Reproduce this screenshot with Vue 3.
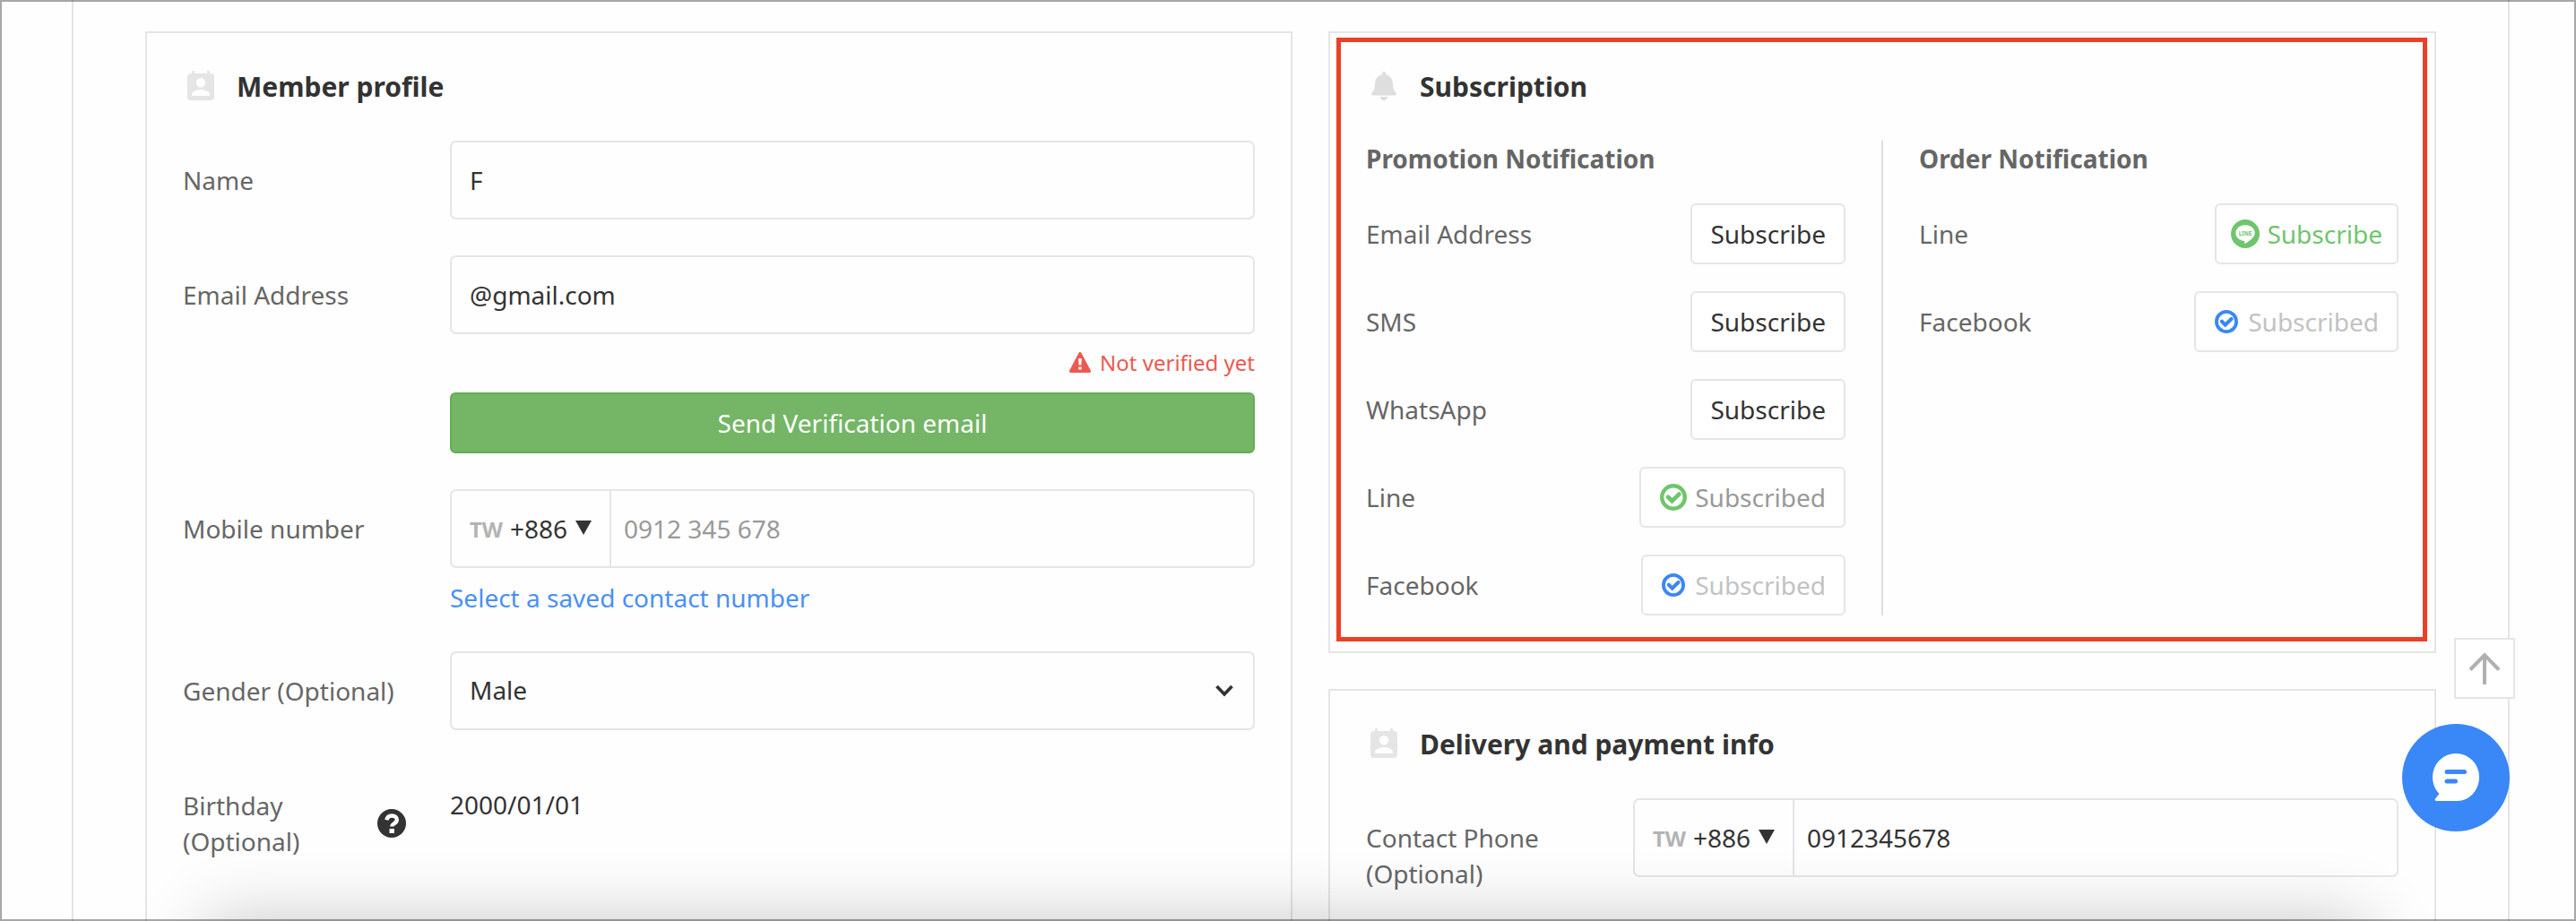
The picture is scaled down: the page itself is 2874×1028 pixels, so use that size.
<template>
  <div class="window">
    <main class="page">
      <section class="card card--profile">
        <h2 class="card__title">
          <svg class="card__icon" viewBox="0 0 34 34">
            <path
              fill="#e5e5e5"
              fill-rule="evenodd"
              d="M7 0h3v3h14V0h3v3h1a4 4 0 0 1 4 4v22a4 4 0 0 1-4 4H6a4 4 0 0 1-4-4V7a4 4 0 0 1 4-4h1zM17 8a5.200 5.200 0 1 0 0 10.400a5.200 5.200 0 1 0 0-10.400zM7 28h20v-1.500c0-3.200-5.500-5.500-10-5.500s-10 2.300-10 5.500z"
            />
          </svg>
          Member profile
        </h2>

        <div class="field field--name">
          <label class="field__label">Name</label>
          <div class="input">F</div>
        </div>

        <div class="field field--email">
          <label class="field__label">Email Address</label>
          <div class="field__body">
            <div class="input">@gmail.com</div>
            <p class="status">
              <svg class="status__icon" viewBox="0 0 24 23">
                <path
                  fill="#eb5a50"
                  fill-rule="evenodd"
                  d="M10.500.9a1.700 1.700 0 0 1 3 0l10.200 19.400A1.700 1.700 0 0 1 22.200 23H1.800A1.700 1.700 0 0 1 .3 20.300zM10.200 7l.4 7.500h2.800l.4-7.500zM10.300 16.500v3h3.400v-3z"
                />
              </svg>
              Not verified yet
            </p>
            <button class="verify-button">Send Verification email</button>
          </div>
        </div>

        <div class="field field--mobile">
          <label class="field__label">Mobile number</label>
          <div class="field__body">
            <div class="input input--phone">
              <span class="country">
                <b class="country__code">TW</b>+886
                <i class="country__caret"></i>
              </span>
              <span class="input__placeholder">0912 345 678</span>
            </div>
            <a class="saved-link">Select a saved contact number</a>
          </div>
        </div>

        <div class="field field--gender">
          <label class="field__label">Gender (Optional)</label>
          <div class="input input--select">
            Male
            <svg class="input__chevron" viewBox="0 0 20 14">
              <path d="M1.500 2 10 10.800 18.500 2" fill="none" stroke="#333" stroke-width="3.600" />
            </svg>
          </div>
        </div>

        <div class="field field--birthday">
          <label class="field__label field__label--help">
            <span>Birthday<br />(Optional)</span>
            <svg class="help-icon" viewBox="0 0 32 32">
              <circle cx="16" cy="16" r="16" fill="#333" />
              <path
                d="M10.300 12.300c.8-3.300 3-4.800 5.900-4.800 3.300 0 5.600 1.900 5.600 4.600 0 4.400-5.400 3.700-5.400 7.500"
                fill="none"
                stroke="#fff"
                stroke-width="4.400"
              />
              <path d="M13.500 22h5.400v5h-5.400z" fill="#fff" />
            </svg>
          </label>
          <span class="birthday">2000/01/01</span>
        </div>
      </section>

      <div class="column">
        <section class="card card--subscription">
          <h2 class="card__title">
            <svg class="card__icon" viewBox="0 0 34 34">
              <path
                fill="#dedede"
                d="M17 1c1.300 0 2 .9 2 2.200v1.100c5.200 1.200 7.700 5 8 10.200.3 5.700 1.100 7.700 3.300 9.800 1.200 1.300.6 3.200-1.200 3.200H4.900c-1.800 0-2.400-1.900-1.200-3.200C5.900 22.200 6.700 20.200 7 14.500c.3-5.200 2.800-9 8-10.200V3.200C15 1.900 15.700 1 17 1zM13 29h8a4 4 0 0 1-8 0z"
              />
            </svg>
            Subscription
          </h2>

          <div class="groups">
            <div
              v-for="group in groups"
              :key="group.title"
              class="group"
            >
              <h3 class="group__title">{{ group.title }}</h3>
              <div v-for="channel in group.channels" :key="channel.name" class="channel">
                <span>{{ channel.name }}</span>
                <button class="channel__button" :class="`channel__button--${channel.state}`">
                  <svg
                    v-if="channel.state === 'line-open'"
                    class="channel__icon"
                    viewBox="0 0 32 32"
                  >
                    <circle cx="16" cy="16" r="16" fill="#6fc56c" />
                    <path
                      fill="#fff"
                      d="M16 6.200c6 0 10.700 3.900 10.700 8.700 0 4.500-5.600 8.700-10.600 11.900-1 .6-1-.4-.8-2.900C9.500 23.500 5.300 19.700 5.300 14.900c0-4.800 4.700-8.700 10.700-8.700z"
                    />
                    <text
                      x="16"
                      y="17.800"
                      text-anchor="middle"
                      textLength="14.500"
                      lengthAdjust="spacingAndGlyphs"
                      class="channel__line-logo"
                    >LINE</text>
                  </svg>
                  <svg
                    v-else-if="channel.state !== 'open'"
                    class="channel__icon"
                    viewBox="0 0 30 30"
                  >
                    <circle cx="15" cy="15" r="12.800" fill="none" stroke="currentColor" stroke-width="4.400" />
                    <path
                      d="M9 14.700l4.500 4.500 7.800-7.600"
                      fill="none"
                      stroke="currentColor"
                      stroke-width="4.800"
                      stroke-linecap="round"
                    />
                  </svg>
                  <span class="channel__text">{{ channel.action }}</span>
                </button>
              </div>
            </div>
          </div>
          <div class="highlight"></div>
        </section>

        <section class="card card--delivery">
          <h2 class="card__title">
            <svg class="card__icon" viewBox="0 0 34 34">
              <path
                fill="#e5e5e5"
                fill-rule="evenodd"
                d="M7 0h3v3h14V0h3v3h1a4 4 0 0 1 4 4v22a4 4 0 0 1-4 4H6a4 4 0 0 1-4-4V7a4 4 0 0 1 4-4h1zM17 8a5.200 5.200 0 1 0 0 10.400a5.200 5.200 0 1 0 0-10.400zM7 28h20v-1.500c0-3.200-5.500-5.500-10-5.500s-10 2.300-10 5.500z"
              />
            </svg>
            Delivery and payment info
          </h2>
          <div class="field field--contact">
            <label class="field__label">Contact Phone<br />(Optional)</label>
            <div class="input input--phone">
              <span class="country">
                <b class="country__code">TW</b>+886
                <i class="country__caret"></i>
              </span>
              <span>0912345678</span>
            </div>
          </div>
        </section>
      </div>
    </main>

    <div class="bottom-shadow"></div>

    <button class="back-to-top">
      <svg viewBox="0 0 36 36">
        <path d="M2 19.500 18 3l16 16.500M18 5v31" fill="none" stroke="#b0b0b0" stroke-width="4" />
      </svg>
    </button>
    <button class="chat">
      <svg viewBox="0 0 54 54">
        <path
          fill="#fff"
          d="M27 0a26 26 0 0 1 26 26.500C53 41.500 41.500 53 29 53H5c-1.300 0-1.800-1.500-1-2.600L8.500 45C3.500 40 1 33.500 1 26.500A26 26 0 0 1 27 0z"
        />
        <path d="M17 20.500h19.500M17 31h9.500" stroke="#3a87f7" stroke-width="5" stroke-linecap="round" />
      </svg>
    </button>
    <div class="window__frame"></div>
  </div>
</template>

<script setup>
const groups = [
  {
    title: "Promotion Notification",
    channels: [
      { name: "Email Address", action: "Subscribe", state: "open" },
      { name: "SMS", action: "Subscribe", state: "open" },
      { name: "WhatsApp", action: "Subscribe", state: "open" },
      { name: "Line", action: "Subscribed", state: "line" },
      { name: "Facebook", action: "Subscribed", state: "facebook" }
    ]
  },
  {
    title: "Order Notification",
    channels: [
      { name: "Line", action: "Subscribe", state: "line-open" },
      { name: "Facebook", action: "Subscribed", state: "facebook" }
    ]
  }
];
</script>

<style>
body {
  background: #fefefe;
  margin: 0;
}
</style>

<style scoped>
.window {
  background: #fefefe;
  box-sizing: border-box;
  color: #333;
  font: 28px/40px "Noto Sans", sans-serif;
  height: 1028px;
  overflow: hidden;
  position: relative;
  width: 2874px;
}

.window * {
  box-sizing: border-box;
}

.window__frame {
  border: 2px solid rgba(0, 0, 0, 0.34);
  inset: 0;
  pointer-events: none;
  position: absolute;
}

button {
  font: inherit;
}

.page {
  border: solid #e5e5e5;
  border-width: 0 2px;
  display: grid;
  gap: 40px;
  grid-template-columns: 1280px 1236px;
  height: 1028px;
  margin: 0 74px 0 80px;
  padding: 35px 80px 0;
}

.card {
  border: 2px solid #e5e5e5;
  padding: 40px;
}

.card--profile {
  height: 1040px;
}

.card--subscription {
  height: 694px;
  position: relative;
}

.card--delivery {
  height: 320px;
}

.column {
  display: flex;
  flex-direction: column;
  gap: 40px;
}

.card__title {
  align-items: center;
  display: flex;
  font-size: 30px;
  font-weight: 700;
  gap: 23px;
  height: 40px;
  line-height: 40px;
  margin: 0 0 40px;
}

.card__icon {
  height: 34px;
  margin: -2px 0 0 3px;
  width: 34px;
}

.field {
  display: grid;
  grid-template-columns: 298px 1fr;
}

.field__label {
  color: #666;
  padding-top: 24px;
}

.field--email,
.field--mobile,
.field--gender {
  margin-top: 40px;
}

.field--birthday {
  margin-top: 64px;
}

.input {
  align-items: center;
  border: 2px solid #e5e5e5;
  border-radius: 7px;
  display: flex;
  height: 88px;
  padding: 0 20px;
}

.input--phone {
  gap: 14px;
}

.input--select {
  justify-content: space-between;
  padding-bottom: 2px;
}

.input__placeholder {
  color: #999;
}

.input__chevron {
  height: 14px;
  margin: 2px 2px 0 0;
  width: 20px;
}

.country {
  align-items: center;
  border-right: 2px solid #e5e5e5;
  display: flex;
  height: 84px;
  width: 158px;
}

.country__code {
  color: #b3b3b3;
  font-size: 24px;
  margin: 2px 8px 0 0;
}

.country__caret {
  border: solid transparent;
  border-top-color: #333;
  border-width: 16px 9px 0;
  margin: -3px 0 0 9px;
}

.status {
  align-items: center;
  color: #eb5a50;
  display: flex;
  font-size: 24px;
  height: 65px;
  justify-content: flex-end;
  line-height: 34px;
  margin: 0;
  padding-bottom: 2px;
}

.status__icon {
  height: 23px;
  margin-right: 10px;
  width: 24px;
}

.verify-button {
  background: #74b566;
  border: 2px solid #65ad57;
  border-radius: 6px;
  color: #fff;
  display: block;
  height: 68px;
  padding: 0;
  width: 100%;
}

.saved-link {
  color: #4a90f5;
  display: block;
  height: 40px;
  margin-top: 13px;
}

.field__label--help {
  align-items: center;
  display: flex;
  justify-content: space-between;
  padding: 0 49px 0 0;
}

.help-icon {
  height: 32px;
  width: 32px;
}

.birthday {
  margin-top: -1px;
}

.groups {
  display: grid;
  grid-template-columns: 577px 1fr;
  grid-template-rows: 530px;
}

.group + .group {
  padding-left: 40px;
}

.group:first-child {
  border-right: 2px solid #ddd;
  padding-right: 40px;
}

.group__title {
  color: #666;
  font-size: 28px;
  font-weight: 700;
  height: 40px;
  line-height: 40px;
  margin: 0 0 30px;
}

.channel {
  align-items: center;
  color: #666;
  display: flex;
  height: 68px;
  justify-content: space-between;
  margin-bottom: 30px;
}

.channel:last-child {
  margin-bottom: 0;
}

.channel__button {
  align-items: center;
  background: #fff;
  border: 2px solid #e5e5e5;
  border-radius: 6px;
  color: #333;
  display: flex;
  gap: 9px;
  height: 68px;
  padding: 0 20px;
}

.channel__icon {
  flex: none;
  height: 30px;
  width: 30px;
}

.channel__button--line {
  color: #6fc56c;
  padding-left: 21px;
}

.channel__button--line .channel__text {
  color: #999;
}

.channel__button--facebook {
  color: #3a87f7;
  padding-left: 21px;
}

.channel__button--facebook .channel__icon {
  height: 26px;
  margin-right: 2px;
  width: 26px;
}

.channel__button--facebook .channel__text {
  color: #c2c2c2;
}

.channel__button--line-open {
  color: #6fc56c;
  gap: 8px;
  padding: 0 16px;
}

.channel__button--line-open .channel__icon {
  height: 32px;
  width: 32px;
}

.channel__line-logo {
  fill: #6fc56c;
  font: 700 6.500px "Noto Sans", sans-serif;
}

/* Frame drawn over the subscription card */
.highlight {
  border: 5px solid #ea4028;
  inset: 5px 8px 11px 7px;
  position: absolute;
}

.bottom-shadow {
  box-shadow: 0 0 80px rgba(0, 0, 0, 0.24);
  height: 100px;
  left: 230px;
  position: absolute;
  right: 234px;
  top: 1030px;
}

.back-to-top {
  align-items: center;
  background: #fff;
  border: 2px solid #e5e5e5;
  display: flex;
  height: 68px;
  justify-content: center;
  left: 2738px;
  padding: 0;
  position: absolute;
  top: 712px;
  width: 68px;
}

.back-to-top svg {
  height: 36px;
  width: 36px;
}

.chat {
  align-items: center;
  background: #3a87f7;
  border: 0;
  border-radius: 50%;
  display: flex;
  height: 120px;
  justify-content: center;
  left: 2680px;
  padding: 0;
  position: absolute;
  top: 808px;
  width: 120px;
}

.chat svg {
  height: 54px;
  width: 54px;
}
</style>
